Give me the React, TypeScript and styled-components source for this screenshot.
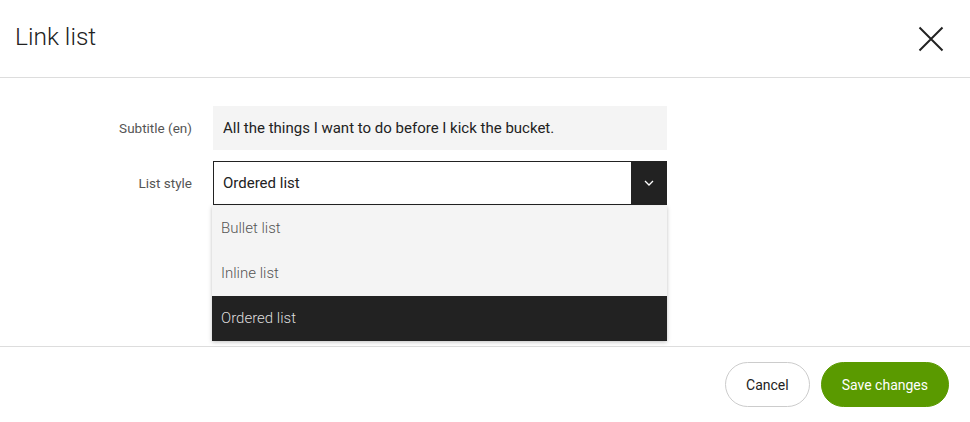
import React from "react";
import styled, { createGlobalStyle } from "styled-components";

const GlobalStyle = createGlobalStyle`
  html, body {
    margin: 0;
    padding: 0;
    background: #ffffff;
    font-family: Roboto, "Liberation Sans", sans-serif;
    color: #222222;
  }
  * {
    box-sizing: border-box;
  }
`;

const Modal = styled.div`
  display: flex;
  flex-direction: column;
  height: 100vh;
  background: #ffffff;
`;

const Header = styled.header`
  display: flex;
  align-items: center;
  justify-content: space-between;
  height: 78px;
  padding: 0 25px 0 15px;
  border-bottom: 1px solid #dddddd;
  flex-shrink: 0;
`;

const Title = styled.h1`
  margin: 0;
  font-size: 24.5px;
  font-weight: 300;
  color: #222222;
  padding-bottom: 4px;
`;

const CloseButton = styled.button`
  display: flex;
  align-items: center;
  justify-content: center;
  width: 28px;
  height: 28px;
  padding: 0;
  border: none;
  background: none;
  cursor: pointer;
  margin-top: 1px;
`;

const Body = styled.main`
  flex: 1;
  padding-top: 28px;
`;

const Form = styled.div`
  display: grid;
  grid-template-columns: 192px 454px;
  column-gap: 21px;
  row-gap: 11px;
  align-items: center;
`;

const Label = styled.label`
  text-align: right;
  font-size: 13.5px;
  color: #555555;
  font-weight: 400;
`;

const TextInput = styled.input`
  height: 44px;
  width: 100%;
  border: none;
  background: #f4f4f4;
  padding: 0 10px;
  font-family: inherit;
  font-size: 15px;
  color: #222222;
  outline: none;
`;

const SelectWrap = styled.div`
  position: relative;
`;

const SelectBox = styled.div`
  display: flex;
  height: 44px;
  border: 1px solid #222222;
  background: #ffffff;
`;

const SelectValue = styled.div`
  flex: 1;
  display: flex;
  align-items: center;
  padding-left: 9px;
  font-size: 15px;
  color: #222222;
`;

const SelectToggle = styled.div`
  width: 35px;
  background: #222222;
  display: flex;
  align-items: center;
  justify-content: center;
`;

const Menu = styled.ul`
  position: absolute;
  top: 45px;
  left: -1px;
  right: 0;
  margin: 0;
  padding: 0;
  list-style: none;
  background: #f4f4f4;
  box-shadow: 0 1px 4px rgba(0, 0, 0, 0.25);
  z-index: 10;
`;

const MenuItem = styled.li<{ $active?: boolean }>`
  height: 45px;
  display: flex;
  align-items: center;
  padding-left: 9px;
  padding-bottom: 1px;
  font-size: 15px;
  font-weight: 300;
  color: ${(p) => (p.$active ? "#dddddd" : "#555555")};
  background: ${(p) => (p.$active ? "#222222" : "transparent")};
`;

const Footer = styled.footer`
  display: flex;
  justify-content: flex-end;
  gap: 11px;
  padding: 15px 21px 15px 0;
  border-top: 1px solid #dddddd;
  flex-shrink: 0;
`;

const Button = styled.button<{ $primary?: boolean }>`
  height: 45px;
  padding: 0 20px;
  border-radius: 23px;
  font-family: inherit;
  font-size: 14px;
  cursor: pointer;
  border: 1px solid ${(p) => (p.$primary ? "#5a9a00" : "#cccccc")};
  background: ${(p) => (p.$primary ? "#5a9a00" : "#ffffff")};
  color: ${(p) => (p.$primary ? "#ffffff" : "#222222")};
`;

const options = ["Bullet list", "Inline list", "Ordered list"];

export default function App() {
  const selected = "Ordered list";

  return (
    <>
      <GlobalStyle />
      <Modal>
        <Header>
          <Title>Link list</Title>
          <CloseButton aria-label="Close">
            <svg width="26" height="26" viewBox="0 0 26 26">
              <path d="M1.5 1.5 L24.5 24.5 M24.5 1.5 L1.5 24.5" stroke="#222" strokeWidth="2" />
            </svg>
          </CloseButton>
        </Header>

        <Body>
          <Form>
            <Label htmlFor="subtitle">Subtitle (en)</Label>
            <TextInput
              id="subtitle"
              defaultValue="All the things I want to do before I kick the bucket."
            />

            <Label>List style</Label>
            <SelectWrap>
              <SelectBox>
                <SelectValue>{selected}</SelectValue>
                <SelectToggle>
                  <svg width="10" height="6" viewBox="0 0 10 6">
                    <path d="M1 1 L5 5 L9 1" fill="none" stroke="#ffffff" strokeWidth="1.3" />
                  </svg>
                </SelectToggle>
              </SelectBox>
              <Menu>
                {options.map((o) => (
                  <MenuItem key={o} $active={o === selected}>
                    {o}
                  </MenuItem>
                ))}
              </Menu>
            </SelectWrap>
          </Form>
        </Body>

        <Footer>
          <Button>Cancel</Button>
          <Button $primary>Save changes</Button>
        </Footer>
      </Modal>
    </>
  );
}
